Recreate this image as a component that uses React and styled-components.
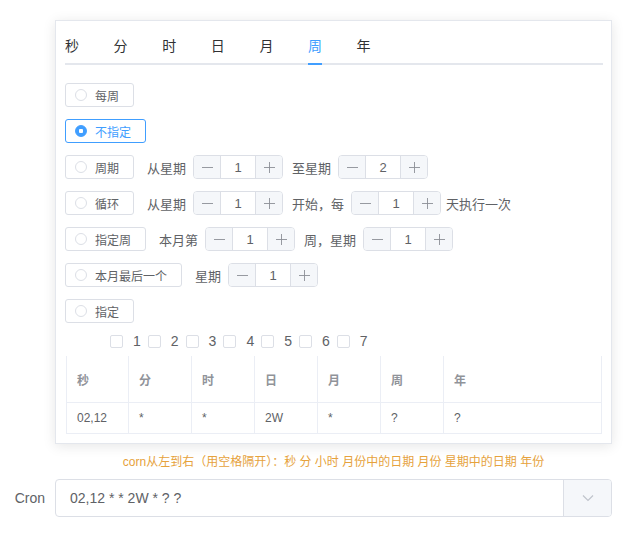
import React from "react";
import styled, { createGlobalStyle } from "styled-components";

const GlobalStyle = createGlobalStyle`
  body {
    margin: 0;
    background: #fff;
    font-family: "Liberation Sans", "Noto Sans CJK SC", sans-serif;
    color: #606266;
  }
`;

const TABS = ["秒", "分", "时", "日", "月", "周", "年"];
const DAYS = ["1", "2", "3", "4", "5", "6", "7"];
const CELLS = ["02,12", "*", "*", "2W", "*", "?", "?"];
const COL_WIDTHS = [62, 63, 63, 63, 63, 63, null];

const Minus = () => (
  <svg width="11" height="11" viewBox="0 0 11 11">
    <line x1="0" y1="5.5" x2="11" y2="5.5" stroke="#8c8f96" strokeWidth="0.9" />
  </svg>
);

const Plus = () => (
  <svg width="11" height="11" viewBox="0 0 11 11">
    <line x1="0" y1="5.5" x2="11" y2="5.5" stroke="#8c8f96" strokeWidth="0.9" />
    <line x1="5.5" y1="0" x2="5.5" y2="11" stroke="#8c8f96" strokeWidth="0.9" />
  </svg>
);

const Chevron = () => (
  <svg width="12" height="8" viewBox="0 0 12 8">
    <polyline
      points="1,1.5 6,6.5 11,1.5"
      fill="none"
      stroke="#c0c4cc"
      strokeWidth="1.2"
    />
  </svg>
);

function Radio({ label, checked }) {
  return (
    <RadioBox $checked={checked}>
      <RadioDot $checked={checked} />
      {label}
    </RadioBox>
  );
}

function NumberBox({ value }) {
  return (
    <NumberWrap>
      <StepBtn $side="left">
        <Minus />
      </StepBtn>
      <NumberValue>{value}</NumberValue>
      <StepBtn $side="right">
        <Plus />
      </StepBtn>
    </NumberWrap>
  );
}

export default function App() {
  return (
    <Page>
      <GlobalStyle />
      <Panel>
        <TabNav>
          {TABS.map(t => (
            <Tab key={t} $active={t === "周"}>
              {t}
            </Tab>
          ))}
        </TabNav>

        <Row>
          <Radio label="每周" />
        </Row>
        <Row>
          <Radio label="不指定" checked />
        </Row>
        <Row>
          <Radio label="周期" />
          <Text>从星期</Text>
          <NumberBox value="1" />
          <Text>至星期</Text>
          <NumberBox value="2" />
        </Row>
        <Row>
          <Radio label="循环" />
          <Text>从星期</Text>
          <NumberBox value="1" />
          <Text>开始，每</Text>
          <NumberBox value="1" />
          <Text $tight>天执行一次</Text>
        </Row>
        <Row>
          <Radio label="指定周" />
          <Text>本月第</Text>
          <NumberBox value="1" />
          <Text>周，星期</Text>
          <NumberBox value="1" />
        </Row>
        <Row>
          <Radio label="本月最后一个" />
          <Text>星期</Text>
          <NumberBox value="1" />
        </Row>
        <Row $last>
          <Radio label="指定" />
        </Row>

        <CheckRow>
          {DAYS.map(d => (
            <CheckItem key={d}>
              <CheckBox />
              <CheckLabel>{d}</CheckLabel>
            </CheckItem>
          ))}
        </CheckRow>

        <Table>
          <colgroup>
            {COL_WIDTHS.map((w, i) => (
              <col key={i} style={w ? { width: w } : undefined} />
            ))}
          </colgroup>
          <thead>
            <tr>
              {TABS.map(t => (
                <Th key={t}>{t}</Th>
              ))}
            </tr>
          </thead>
          <tbody>
            <tr>
              {CELLS.map((c, i) => (
                <Td key={i}>{c}</Td>
              ))}
            </tr>
          </tbody>
        </Table>
      </Panel>

      <Hint>
        corn从左到右（用空格隔开）：秒 分 小时 月份中的日期 月份 星期中的日期 年份
      </Hint>

      <CronRow>
        <CronLabel>Cron</CronLabel>
        <CronInput>
          <CronValue>02,12 * * 2W * ? ?</CronValue>
          <CronAppend>
            <Chevron />
          </CronAppend>
        </CronInput>
      </CronRow>
    </Page>
  );
}

const Page = styled.div`
  padding-top: 20px;
`;

const Panel = styled.div`
  box-sizing: border-box;
  margin-left: 55px;
  width: 557px;
  padding: 8px 8px 9px 9px;
  border: 1px solid #e4e7ed;
  background: #fff;
  box-shadow: 0 2px 12px 0 rgba(0, 0, 0, 0.1);
`;

const TabNav = styled.div`
  box-sizing: border-box;
  display: flex;
  height: 36px;
  border-bottom: 2px solid #e4e7ed;
  margin-bottom: 18px;
`;

const Tab = styled.div`
  position: relative;
  font-size: 14px;
  line-height: 34px;
  margin-right: 34.6px;
  color: ${p => (p.$active ? "#409eff" : "#303133")};
  &::after {
    content: "";
    display: ${p => (p.$active ? "block" : "none")};
    position: absolute;
    left: 0;
    right: 0;
    bottom: -2px;
    height: 2px;
    background: #409eff;
  }
`;

const Row = styled.div`
  display: flex;
  align-items: center;
  height: 24px;
  margin-bottom: ${p => (p.$last ? "11px" : "12px")};
`;

const RadioBox = styled.div`
  box-sizing: border-box;
  display: flex;
  align-items: center;
  height: 24px;
  padding: 0 14px 0 9px;
  margin-right: 13px;
  border: 1px solid ${p => (p.$checked ? "#409eff" : "#dcdfe6")};
  border-radius: 3px;
  font-size: 12px;
  color: ${p => (p.$checked ? "#409eff" : "#606266")};
  white-space: nowrap;
`;

const RadioDot = styled.span`
  box-sizing: border-box;
  width: 12px;
  height: 12px;
  margin-right: 8px;
  border-radius: 50%;
  border: 1px solid ${p => (p.$checked ? "#409eff" : "#dcdfe6")};
  background: ${p =>
    p.$checked
      ? "radial-gradient(circle, #fff 0 2px, #409eff 2.5px)"
      : "#fff"};
`;

const Text = styled.span`
  font-size: 13px;
  color: #606266;
  margin-right: ${p => (p.$tight ? "0" : "7px")};
  margin-left: ${p => (p.$tight ? "-4px" : "0")};
  white-space: nowrap;
`;

const NumberWrap = styled.div`
  box-sizing: border-box;
  display: flex;
  width: 90px;
  height: 24px;
  margin-right: 9px;
  border: 1px solid #dcdfe6;
  border-radius: 4px;
  overflow: hidden;
`;

const StepBtn = styled.div`
  display: flex;
  align-items: center;
  justify-content: center;
  width: 26px;
  background: #f5f7fa;
  border-left: ${p => (p.$side === "right" ? "1px solid #dcdfe6" : "none")};
  border-right: ${p => (p.$side === "left" ? "1px solid #dcdfe6" : "none")};
`;

const NumberValue = styled.div`
  flex: 1;
  display: flex;
  align-items: center;
  justify-content: center;
  font-size: 13px;
  color: #606266;
  background: #fff;
`;

const CheckRow = styled.div`
  display: flex;
  align-items: center;
  height: 14px;
  margin-left: 45px;
  margin-bottom: 8px;
`;

const CheckItem = styled.div`
  display: flex;
  align-items: center;
  margin-right: 7px;
`;

const CheckBox = styled.span`
  box-sizing: border-box;
  width: 13px;
  height: 13px;
  border: 1px solid #dcdfe6;
  border-radius: 2px;
  background: #fff;
`;

const CheckLabel = styled.span`
  font-size: 14px;
  padding-left: 10px;
  color: #606266;
`;

const Table = styled.table`
  width: 536px;
  margin-left: 1px;
  border-collapse: collapse;
  table-layout: fixed;
  border-left: 1px solid #ebeef5;
  border-right: 1px solid #ebeef5;
  border-bottom: 1px solid #ebeef5;
  font-size: 12px;
`;

const Th = styled.th`
  height: 46px;
  padding: 0 0 0 10px;
  text-align: left;
  font-weight: bold;
  color: #909399;
  border-right: 1px solid #ebeef5;
  border-bottom: 1px solid #ebeef5;
  &:last-child {
    border-right: none;
  }
`;

const Td = styled.td`
  height: 30px;
  padding: 0 0 0 10px;
  color: #606266;
  border-right: 1px solid #ebeef5;
  &:last-child {
    border-right: none;
  }
`;

const Hint = styled.div`
  margin-left: 55px;
  width: 557px;
  margin-top: 8px;
  line-height: 20px;
  text-align: center;
  font-size: 12px;
  color: #e6a23c;
`;

const CronRow = styled.div`
  display: flex;
  align-items: center;
  margin-top: 7px;
`;

const CronLabel = styled.div`
  box-sizing: border-box;
  width: 55px;
  padding-right: 10px;
  text-align: right;
  font-size: 14px;
  color: #606266;
`;

const CronInput = styled.div`
  box-sizing: border-box;
  display: flex;
  width: 557px;
  height: 38px;
  border: 1px solid #dcdfe6;
  border-radius: 4px;
  overflow: hidden;
`;

const CronValue = styled.div`
  flex: 1;
  display: flex;
  align-items: center;
  padding-left: 14px;
  font-size: 14px;
  color: #606266;
`;

const CronAppend = styled.div`
  display: flex;
  align-items: center;
  justify-content: center;
  width: 47px;
  background: #f5f7fa;
  border-left: 1px solid #dcdfe6;
`;
